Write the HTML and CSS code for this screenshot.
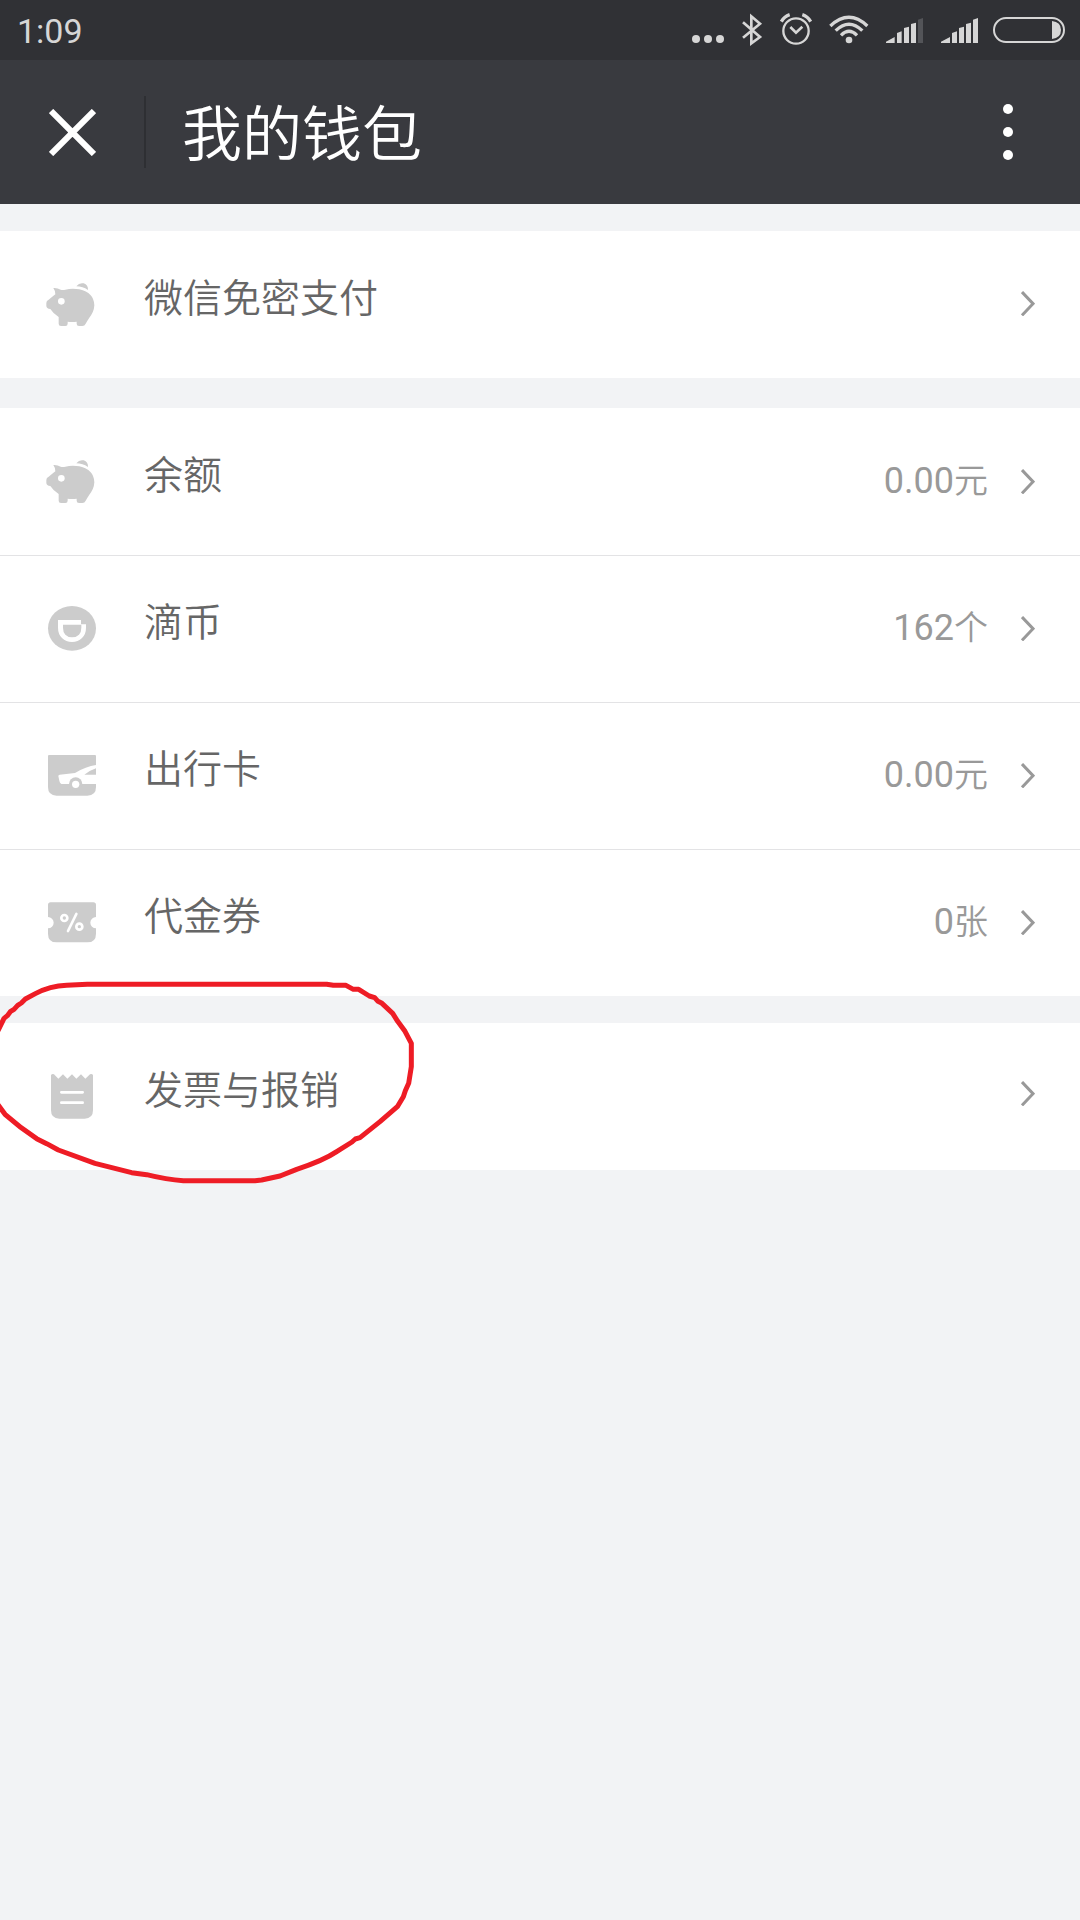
FILE: index.html
```html
<!DOCTYPE html>
<html lang="zh-CN">

<head>
    <meta charset="UTF-8">
    <meta name="viewport" content="width=device-width, initial-scale=1.0">
    <title>我的钱包</title>
    <link rel="stylesheet" href="styles.css">
</head>

<body>
    <svg class="symbols">
        <symbol id="pig" viewBox="0 0 150 150">
            <path d="M22 21Q34 20 44 26Q50 28 58 26Q78 21 100 25Q144 35 145 73Q144 93 130 110Q124 119 119 128Q116 135 109 135H99Q92 135 92 128V122Q78 124 65 122V128Q65 135 58 135H45Q38 135 38 128V108Q22 98 13 84Q1 83 1 74V66Q1 58 8 56Q16 50 28 40Q28 29 22 21Z" />
            <path d="M91 16Q100 4 113 7Q127 12 126 27Q110 16 91 16Z" />
            <circle class="cut" cx="46" cy="61" r="10" />
        </symbol>
        <symbol id="arrow" viewBox="0 0 42 75">
            <path d="M3 3L36 38L3 73" />
        </symbol>
    </svg>

    <div class="status-bar">
        <span class="time">1:09</span>
        <div class="status-icons">
            <svg width="32" viewBox="36 0 96 180">
                <circle cx="48" cy="117" r="12" />
                <circle cx="84" cy="117" r="12" />
                <circle cx="120" cy="117" r="12" />
            </svg>
            <svg width="20" viewBox="186 0 60 180">
                <path class="line" stroke-width="8" d="M189 67L240 111L214 130V49L240 71L189 113" />
            </svg>
            <svg width="32" viewBox="300 0 96 180">
                <circle class="line" stroke-width="7" cx="348" cy="93" r="38" />
                <path class="line" stroke-width="8" d="M331 81L348 98L367 80" />
                <path class="line" stroke-width="10" d="M304 65Q313 49 329 44M392 65Q383 49 367 44" />
            </svg>
            <svg width="38" viewBox="450 0 114 180">
                <circle cx="507" cy="120" r="10" />
                <path class="line" stroke-width="10" d="M451 78Q507 26 562 78M467 92Q507 53 547 92M483 106Q507 82 531 106" />
            </svg>
            <svg width="38" viewBox="618 0 114 180">
                <path d="M618 129V125L644 111V129ZM651 129V99L665 94V129ZM672 129V84L687 80V129ZM693 129V72L708 68V129Z" />
                <path class="dim" d="M714 129V59L729 54V129Z" />
            </svg>
            <svg width="33" viewBox="786 0 99 180">
                <path d="M783 129V125L810 111V129ZM816 129V99L831 94V129ZM837 129V84L852 80V129ZM858 129V72L873 68V129ZM879 129V59L894 54V129Z" />
            </svg>
            <svg width="72" viewBox="939 0 216 180">
                <rect class="line" stroke-width="6" x="942" y="54" width="210" height="72" rx="36" />
                <path d="M1116 63Q1143 66 1143 90Q1143 114 1116 117Z" />
            </svg>
        </div>
    </div>

    <div class="header">
        <svg class="close" viewBox="0 0 46 46">
            <path d="M2 2L44 44M44 2L2 44" />
        </svg>
        <div class="divider"></div>
        <h1>我的钱包</h1>
        <div class="more">
            <i></i>
            <i></i>
            <i></i>
        </div>
    </div>

    <div class="list list-pay">
        <div class="item">
            <svg class="icon"><use href="#pig" /></svg>
            <span class="name">微信免密支付</span>
            <svg class="arrow"><use href="#arrow" /></svg>
        </div>
    </div>

    <div class="list list-wallet">
        <div class="item">
            <svg class="icon"><use href="#pig" /></svg>
            <span class="name">余额</span>
            <span class="value">0.00<small>元</small></span>
            <svg class="arrow"><use href="#arrow" /></svg>
        </div>
        <div class="item">
            <svg class="icon" viewBox="0 0 150 150">
                <ellipse cx="78" cy="70" rx="72" ry="67" />
                <path class="cut" d="M36 45H105V58H120V68Q120 87 108 99Q96 111 78 111Q60 111 48 99Q36 87 36 68Z" />
                <path d="M51 59H106V68Q106 82 99 89Q91 97 78 97Q66 97 58 89Q51 82 51 68Z" />
            </svg>
            <span class="name">滴币</span>
            <span class="value">162<small>个</small></span>
            <svg class="arrow"><use href="#arrow" /></svg>
        </div>
        <div class="item">
            <svg class="icon" viewBox="0 0 150 150">
                <path d="M6 12Q6 9 9 9H147Q150 9 150 12V105Q150 131 124 131H32Q6 131 6 105Z" />
                <path class="cut" d="M37 72Q37 69 41 68L87 63Q120 43 150 39V49Q130 56 115 68H150V96H50Q42 96 40 86Z" />
                <circle cx="89" cy="96" r="20" />
                <circle class="cut" cx="89" cy="97" r="11" />
            </svg>
            <span class="name">出行卡</span>
            <span class="value">0.00<small>元</small></span>
            <svg class="arrow"><use href="#arrow" /></svg>
        </div>
        <div class="item">
            <svg class="icon" viewBox="0 0 150 150">
                <path d="M14 10H142Q150 10 150 18V54A17 17 0 0 0 150 88V104Q150 130 124 130H32Q6 130 6 104V88A17 17 0 0 0 6 54V18Q6 10 14 10Z" />
                <g class="cut-line">
                    <circle cx="55" cy="57" r="9" />
                    <circle cx="100" cy="83" r="9" />
                    <path d="M66 96L91 45" />
                </g>
            </svg>
            <span class="name">代金券</span>
            <span class="value">0<small>张</small></span>
            <svg class="arrow"><use href="#arrow" /></svg>
        </div>
    </div>

    <div class="list list-invoice">
        <div class="item">
            <svg class="icon" viewBox="0 0 150 150">
                <path d="M15 6Q19 2 24 4L37 17L51 4L64 17L78 4L91 17L105 4L118 17L132 4Q138 2 141 6V112Q141 137 116 137H40Q15 137 15 112Z" />
                <path class="cut-line" d="M46 58H110M46 89H110" />
            </svg>
            <span class="name">发票与报销</span>
            <svg class="arrow"><use href="#arrow" /></svg>
        </div>
    </div>

    <!-- hand drawn circle round the last item -->
    <svg class="mark" viewBox="0 0 1320 720">
        <path d="M-6 212L12 175L22 167L32 154L42 148L53 136L64 129L76 117L106 101Q150 78 200 76L262 73H980L1000 76H1038L1060 88H1076L1108 108L1124 113L1134 124L1146 130L1178 160L1193 184L1215 214L1234 250V320L1226 370L1216 392L1210 410L1192 440L1140 485L1080 533L1066 537L1056 546L1010 575Q970 602 890 628L840 648L785 660L765 662H550Q500 659 440 644L395 638L285 610L175 570L140 551L110 536Q60 503 15 463L-6 434" />
    </svg>
</body>

</html>
```
FILE: styles.css
```css
* {
    padding: 0;
    margin: 0;
    box-sizing: border-box;
}

body {
    position: relative;
    min-height: 1920px;
    background-color: #f2f3f5;
    font-family: Roboto, "Noto Sans CJK SC", sans-serif;
    overflow: hidden;
}

.symbols {
    display: none;
}

/* status bar */
.status-bar {
    display: flex;
    justify-content: space-between;
    height: 60px;
    padding: 0 15px 0 17px;
    background-color: #303135;
}

.time {
    font-size: 34px;
    line-height: 63px;
    color: #d6d6d6;
}

.status-icons {
    display: flex;
    gap: 18px;
}

.status-icons svg {
    height: 60px;
    fill: #d6d6d6;
    overflow: visible;
}

.status-icons .line {
    fill: none;
    stroke: #d6d6d6;
}

.status-icons .dim {
    fill: #535458;
}

/* header */
.header {
    display: flex;
    align-items: center;
    height: 144px;
    padding: 0 67px 0 49px;
    background-color: #393a3f;
}

.close {
    width: 47px;
    height: 47px;
    stroke: white;
    stroke-width: 6;
}

.divider {
    width: 2px;
    height: 72px;
    margin: 0 36px 0 48px;
    background-color: #2e2f33;
}

.header h1 {
    flex: 1;
    padding-top: 8px;
    font-size: 60px;
    font-weight: 350;
    line-height: 136px;
    color: white;
}

.more {
    display: flex;
    flex-direction: column;
    gap: 13px;
}

.more i {
    width: 10px;
    height: 10px;
    border-radius: 50%;
    background-color: white;
}

/* list */
.list {
    margin-top: 27px;
    background-color: white;
}

.list-wallet {
    margin-top: 30px;
}

.item {
    display: flex;
    align-items: center;
    height: 147px;
    padding: 0 45px 0 46px;
}

.item + .item {
    box-shadow: inset 0 1px #e3e3e5;
}

.icon {
    width: 50px;
    height: 50px;
    margin: 3px 48px 0 0;
    fill: #ccc;
}

.cut {
    fill: white;
}

.cut-line {
    fill: none;
    stroke: white;
    stroke-width: 8;
    stroke-linecap: round;
}

.name {
    flex: 1;
    padding-bottom: 12px;
    font-size: 39px;
    font-weight: 350;
    line-height: 60px;
    color: #666;
}

.value {
    margin-right: 33px;
    padding-bottom: 2px;
    font-size: 36px;
    line-height: 54px;
    color: #999;
}

.value small {
    font-size: 34px;
    font-weight: 350;
}

.arrow {
    width: 14px;
    height: 25px;
    fill: none;
    stroke: #999;
    stroke-width: 9;
}

.list-pay .arrow {
    margin-bottom: 3px;
}

.list-invoice .arrow {
    margin-bottom: 6px;
}

.mark {
    position: absolute;
    left: 0;
    top: 960px;
    width: 440px;
    height: 240px;
    fill: none;
    stroke: #ee1c25;
    stroke-width: 15;
    stroke-linejoin: round;
}
```
